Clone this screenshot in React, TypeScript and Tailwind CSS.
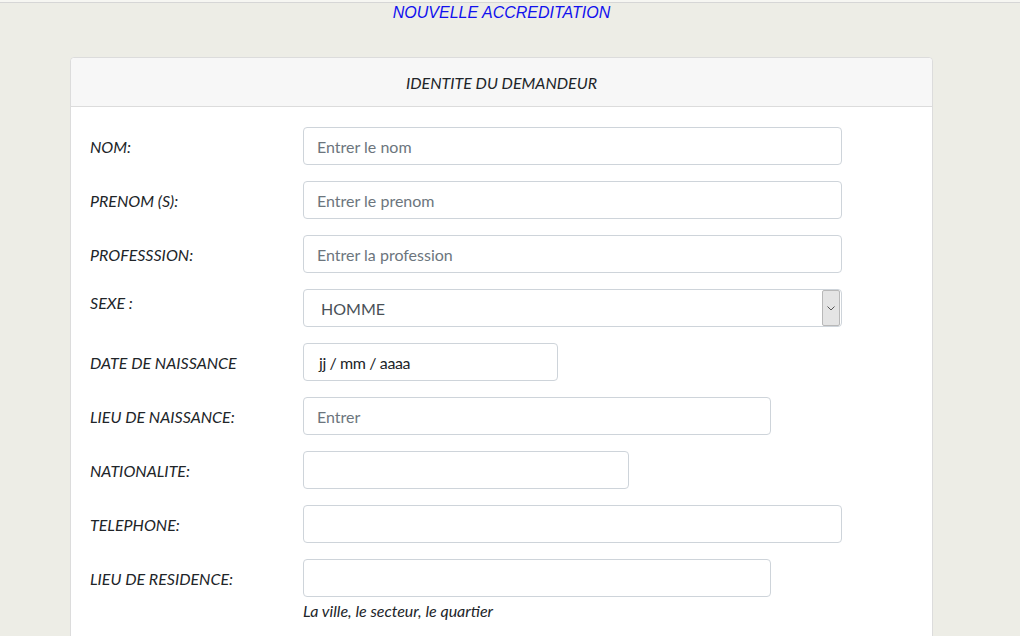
import React from "react";

const lato = { fontFamily: "Lato, 'Open Sans', sans-serif" };

function Row({
  label,
  children,
  labelPad = "pt-[8px]",
}: {
  label: string;
  children: React.ReactNode;
  labelPad?: string;
}) {
  return (
    <div className="flex items-start">
      <div className={`w-[213px] shrink-0 text-[16px] italic text-[#212529] ${labelPad}`}>{label}</div>
      <div className="flex flex-col">{children}</div>
    </div>
  );
}

function Field({ w, placeholder, value }: { w: string; placeholder?: string; value?: string }) {
  return (
    <div
      className={`${w} h-[38px] rounded-[4px] border border-[#ced4da] bg-white flex items-center px-[13px] pt-[1px] text-[16px] ${
        value ? "text-[#212529]" : "text-[#6c757d]"
      }`}
    >
      {value ?? placeholder ?? ""}
    </div>
  );
}

export default function App() {
  return (
    <div className="w-[1020px] h-[636px] overflow-hidden bg-[#ededE6]" style={lato}>
      <div className="h-[2px] bg-[#f6f6f2]" />
      <div className="h-px bg-[#d6d6d6]" />
      <div className="ml-[70px] w-[863px]">
        <div
          className="text-center text-[16px] italic text-[#1111ee] leading-[18px] pt-[1px]"
          style={{ fontFamily: "'Liberation Sans', Arial, sans-serif" }}
        >
          NOUVELLE ACCREDITATION
        </div>
        <div className="mt-[35px] rounded-[4px] border border-[#dcdcdc] bg-white">
          <div className="h-[49px] pt-[1px] bg-[#f7f7f7] border-b border-[#dcdcdc] flex items-center justify-center text-[16px] italic text-[#212529] rounded-t-[4px]">
            IDENTITE DU DEMANDEUR
          </div>
          <div className="pl-[19px] pt-[20px] pb-[40px] flex flex-col gap-[16px]">
            <Row label="NOM:">
              <Field w="w-[539px]" placeholder="Entrer le nom" />
            </Row>
            <Row label="PRENOM (S):">
              <Field w="w-[539px]" placeholder="Entrer le prenom" />
            </Row>
            <Row label="PROFESSSION:">
              <Field w="w-[539px]" placeholder="Entrer la profession" />
            </Row>
            <Row label="SEXE :" labelPad="pt-[2px]">
              <div className="w-[539px] h-[38px] rounded-[4px] border border-[#ced4da] bg-white flex items-center">
                <div className="flex-1 pl-[17px] pt-[1px] text-[16px] text-[#495057]">HOMME</div>
                <div className="w-[18px] h-[36px] mr-[1px] bg-[#e4e4e4] border border-[#b8b8b8] rounded-[2px] flex items-center justify-center">
                  <svg width="8" height="5" viewBox="0 0 8 5">
                    <path d="M0.5 0.5 L4 4 L7.5 0.5" fill="none" stroke="#555" strokeWidth="1" />
                  </svg>
                </div>
              </div>
            </Row>
            <Row label="DATE DE NAISSANCE">
              <div className="w-[255px] h-[38px] rounded-[4px] border border-[#ced4da] bg-white flex items-center pl-[15px] pt-[1px] text-[16px] text-[#212529] tracking-[-0.4px]">
                jj / mm / aaaa
              </div>
            </Row>
            <Row label="LIEU DE NAISSANCE:">
              <Field w="w-[468px]" placeholder="Entrer" />
            </Row>
            <Row label="NATIONALITE:">
              <Field w="w-[326px]" />
            </Row>
            <Row label="TELEPHONE:">
              <Field w="w-[539px]" />
            </Row>
            <Row label="LIEU DE RESIDENCE:">
              <Field w="w-[468px]" />
              <div className="mt-[2px] text-[16px] italic text-[#212529]">La ville, le secteur, le quartier</div>
            </Row>
          </div>
        </div>
      </div>
    </div>
  );
}
